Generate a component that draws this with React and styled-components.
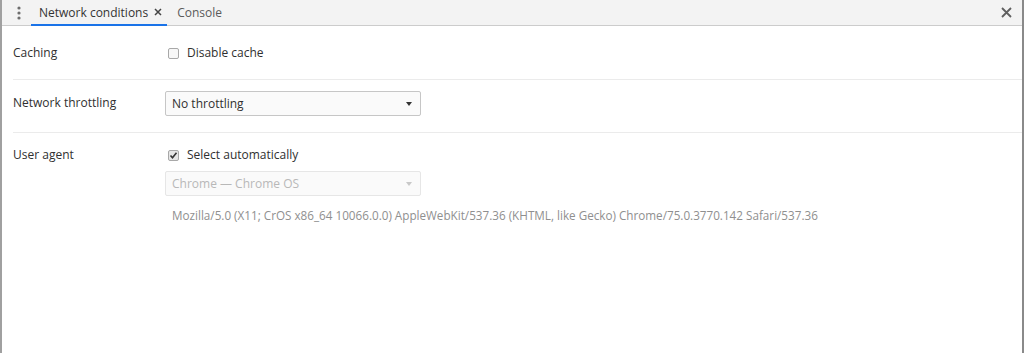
import React from "react";
import styled, { createGlobalStyle } from "styled-components";

const Global = createGlobalStyle`
  html, body { margin: 0; padding: 0; background: #fff; }
  body { font-family: "Open Sans", "Noto Sans", sans-serif; font-size: 12px; color: #303030; }
  * { box-sizing: border-box; }
`;

const Frame = styled.div`
  width: 1024px;
  height: 353px;
  display: flex;
  flex-direction: column;
  border-left: 2px solid #a0a0a0;
  border-right: 2px solid #8a8a8a;
  background: #fff;
  overflow: hidden;
`;

const TabBar = styled.div`
  height: 26px;
  display: flex;
  align-items: stretch;
  background: #f3f3f3;
  border-bottom: 1px solid #cccccc;
  flex: none;
`;

const MenuButton = styled.div`
  width: 29px;
  display: flex;
  align-items: center;
  justify-content: center;
  padding-left: 4px;
`;

const Tab = styled.div`
  display: flex;
  align-items: center;
  gap: 6px;
  padding: ${(p) => (p.$active ? "0 5px 0 8px" : "0 10px 0 10px")};
  color: ${(p) => (p.$active ? "#333" : "#5a5a5a")};
  border-bottom: 2px solid ${(p) => (p.$active ? "#1a73e8" : "transparent")};
  margin-bottom: -1px;
  font-size: 12px;
`;

const Spacer = styled.div`
  flex: 1;
`;

const CloseButton = styled.div`
  width: 28px;
  display: flex;
  align-items: center;
  justify-content: center;
  margin-right: 2px;
`;

const Content = styled.div`
  padding: 0 0 0 11px;
  display: flex;
  flex-direction: column;
`;

const Section = styled.div`
  display: grid;
  grid-template-columns: 152px 1fr;
  padding: ${(p) => p.$pad || "18px 0 18px 0"};
  border-bottom: ${(p) => (p.$last ? "none" : "1px solid #ebebeb")};
`;

const Label = styled.div`
  color: #303030;
  line-height: 16px;
  padding-top: ${(p) => p.$top || "0"};
`;

const Field = styled.div`
  display: flex;
  flex-direction: column;
  align-items: flex-start;
`;

const CheckRow = styled.label`
  display: flex;
  align-items: center;
  gap: 8px;
  padding-left: 3px;
  line-height: 16px;
  color: #303030;
`;

const Box = styled.span`
  width: 11px;
  height: 11px;
  border: 1px solid #a8a8a8;
  border-radius: 2px;
  background: ${(p) => (p.$checked ? "#e6e6e6" : "#f7f7f7")};
  display: flex;
  align-items: center;
  justify-content: center;
`;

const Select = styled.div`
  width: 256px;
  height: 25px;
  margin-top: ${(p) => p.$mt || "0"};
  border: 1px solid ${(p) => (p.$disabled ? "#e6e6e6" : "#c6c6c6")};
  border-radius: 2px;
  background: #fafafa;
  color: ${(p) => (p.$disabled ? "#b8b8b8" : "#303030")};
  display: flex;
  align-items: center;
  justify-content: space-between;
  padding: 0 8px 0 6px;
`;

const Arrow = styled.span`
  width: 0;
  height: 0;
  border-left: 3.5px solid transparent;
  border-right: 3.5px solid transparent;
  border-top: 4px solid ${(p) => (p.$disabled ? "#c8c8c8" : "#333")};
`;

const UAString = styled.div`
  color: #8f8f8f;
  padding-left: 7px;
  margin-top: 11px;
  line-height: 16px;
  font-size: 11.7px;
`;

export default function App() {
  return (
    <>
      <Global />
      <Frame>
        <TabBar>
          <MenuButton>
            <svg width="4" height="14" viewBox="0 0 4 14">
              <circle cx="2" cy="2" r="1.6" fill="#6e6e6e" />
              <circle cx="2" cy="7" r="1.6" fill="#6e6e6e" />
              <circle cx="2" cy="12" r="1.6" fill="#6e6e6e" />
            </svg>
          </MenuButton>
          <Tab $active>
            Network conditions
            <svg width="8" height="8" viewBox="0 0 8 8">
              <path d="M1 1L7 7M7 1L1 7" stroke="#444" strokeWidth="1.5" />
            </svg>
          </Tab>
          <Tab>Console</Tab>
          <Spacer />
          <CloseButton>
            <svg width="11" height="11" viewBox="0 0 11 11">
              <path d="M1 1L10 10M10 1L1 10" stroke="#5f5f5f" strokeWidth="1.8" />
            </svg>
          </CloseButton>
        </TabBar>
        <Content>
          <Section $pad="19px 0 18px 0">
            <Label>Caching</Label>
            <Field>
              <CheckRow>
                <Box />
                Disable cache
              </CheckRow>
            </Field>
          </Section>
          <Section $pad="11px 0 16px 0">
            <Label $top="4px">Network throttling</Label>
            <Field>
              <Select>
                No throttling
                <Arrow />
              </Select>
            </Field>
          </Section>
          <Section $pad="14px 0 0 0" $last>
            <Label>User agent</Label>
            <Field>
              <CheckRow>
                <Box $checked>
                  <svg width="9" height="9" viewBox="0 0 9 9">
                    <path d="M1.5 4.5L3.5 6.8L7.5 1.8" fill="none" stroke="#333" strokeWidth="1.6" />
                  </svg>
                </Box>
                Select automatically
              </CheckRow>
              <Select $disabled $mt="8px">
                Chrome — Chrome OS
                <Arrow $disabled />
              </Select>
              <UAString>
                Mozilla/5.0 (X11; CrOS x86_64 10066.0.0) AppleWebKit/537.36 (KHTML, like Gecko) Chrome/75.0.3770.142 Safari/537.36
              </UAString>
            </Field>
          </Section>
        </Content>
      </Frame>
    </>
  );
}
